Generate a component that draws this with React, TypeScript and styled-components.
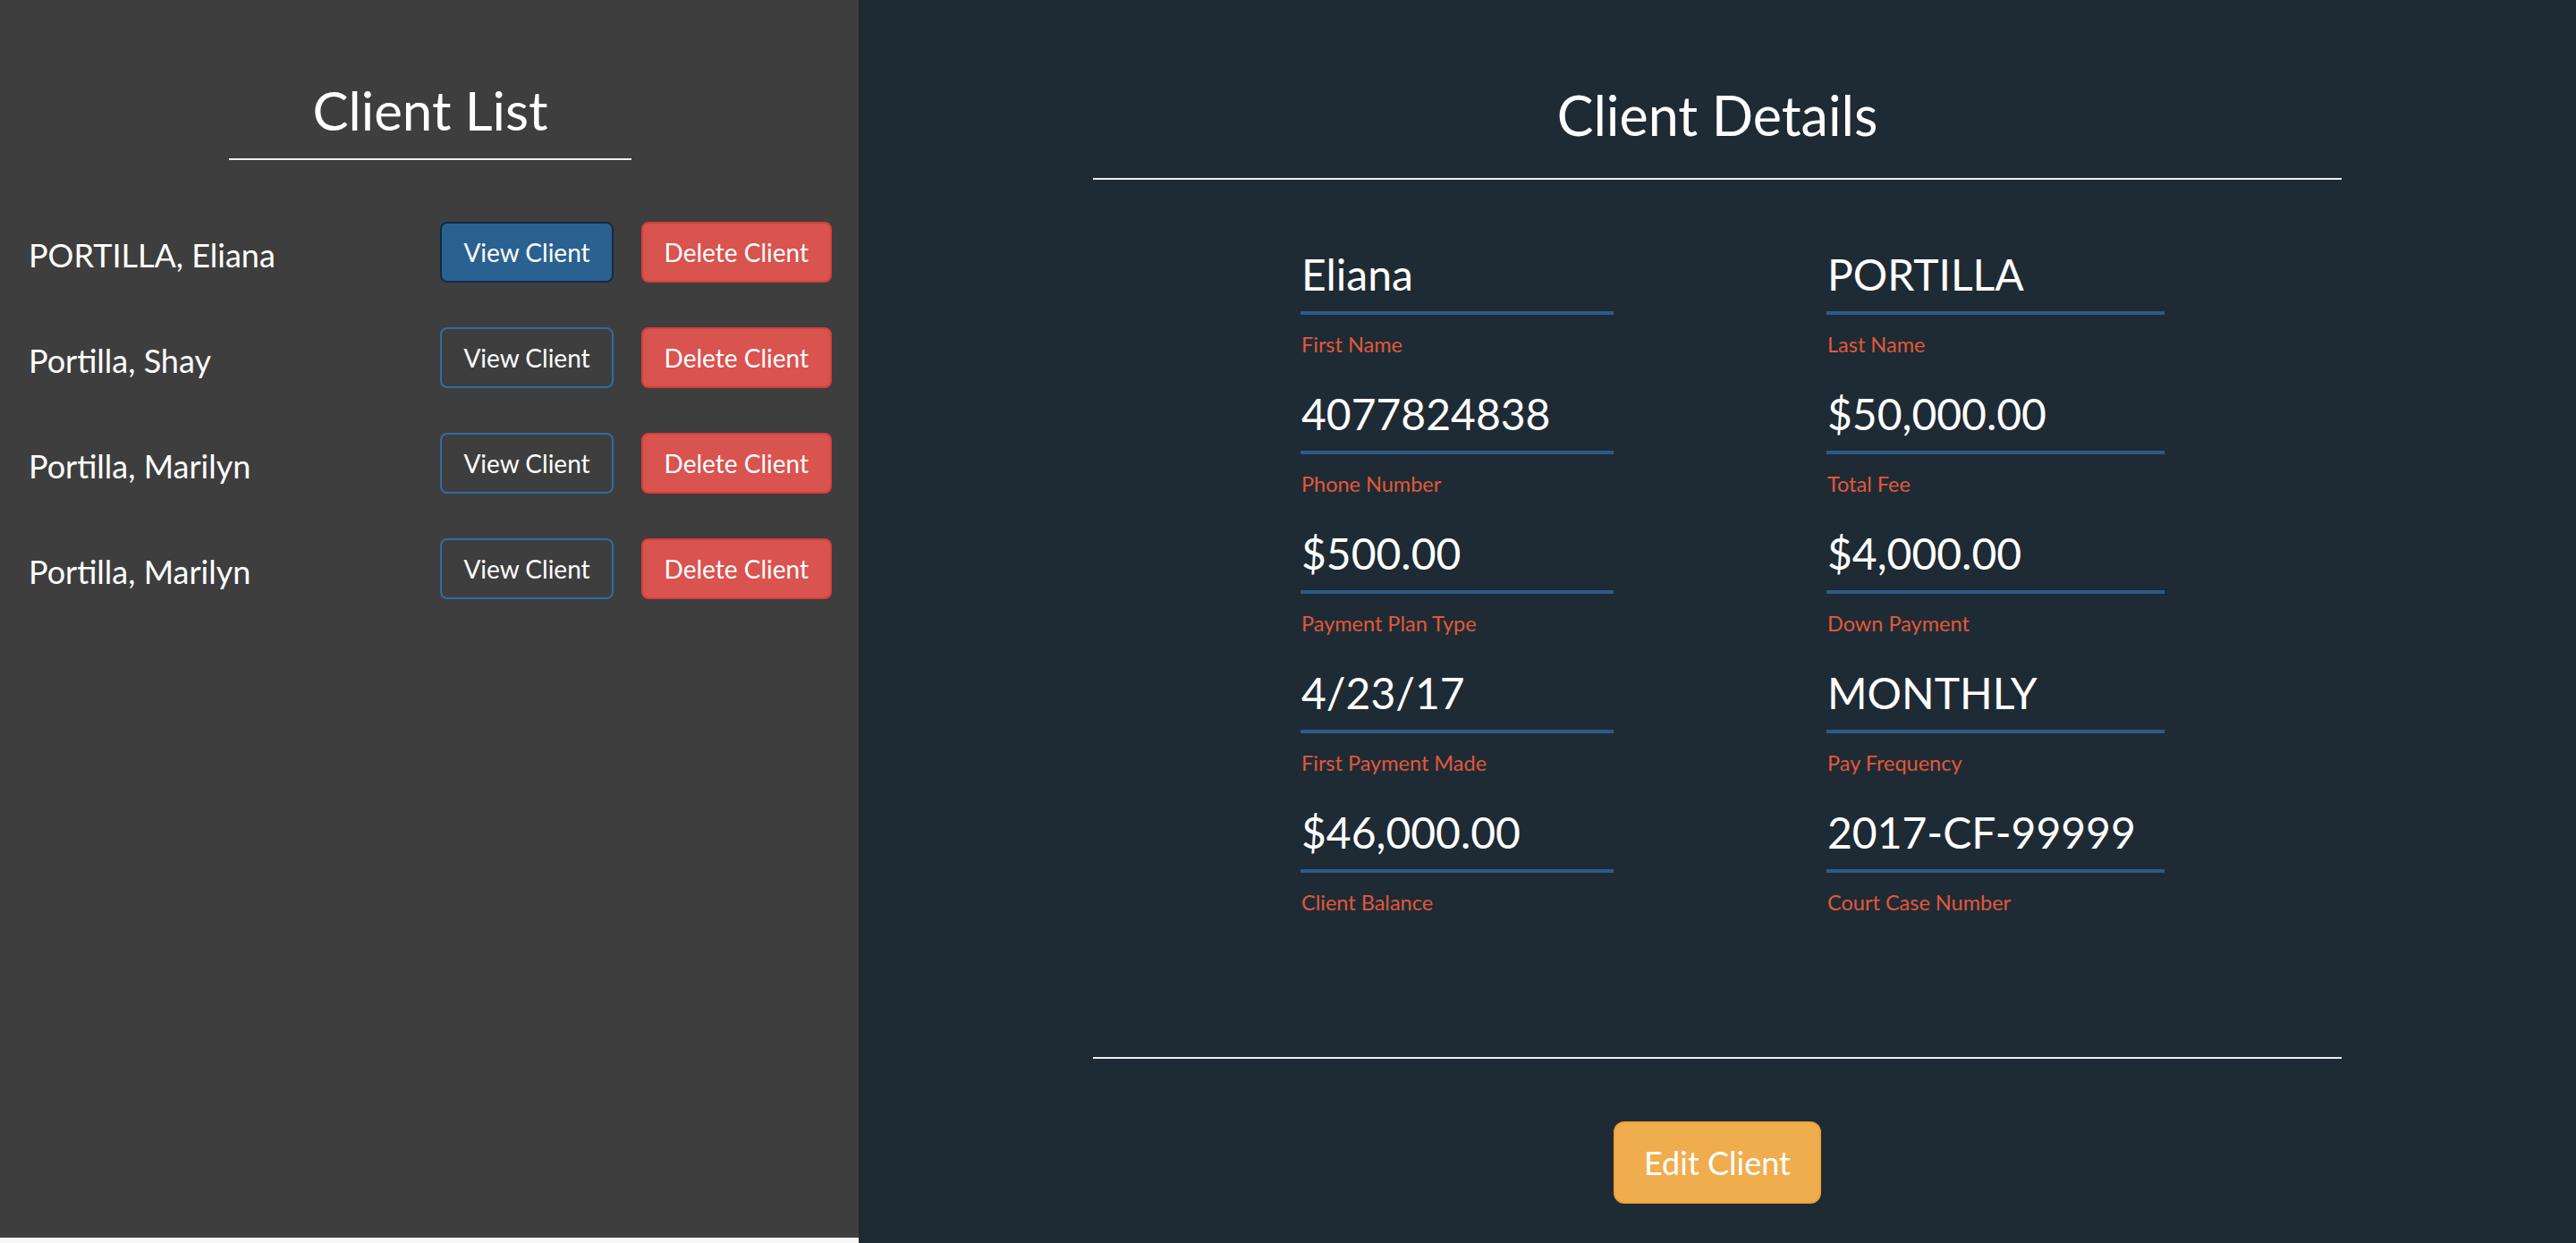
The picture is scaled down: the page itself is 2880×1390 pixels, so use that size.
import React from "react";
import styled, { createGlobalStyle } from "styled-components";

const GlobalStyle = createGlobalStyle`
  html, body {
    margin: 0;
    padding: 0;
    background: #f7f7f7;
    font-family: Lato, "Open Sans", Arial, sans-serif;
  }
  * { box-sizing: border-box; }
`;

const Page = styled.div`
  display: flex;
  align-items: flex-start;
  width: 2880px;
`;

const ListPanel = styled.aside`
  width: 960px;
  height: 1384px;
  background: #3e3e3e;
  padding: 90px 30px 0 32px;
  display: flex;
  flex-direction: column;
`;

const DetailsPanel = styled.main`
  flex: 1;
  min-height: 1390px;
  background: #1e2b34;
  padding: 95px 0 44px;
  display: flex;
  flex-direction: column;
  align-items: center;
`;

const PanelTitle = styled.h2<{ $size: number }>`
  margin: 0;
  font-size: ${(p) => p.$size}px;
  line-height: ${(p) => Math.round(p.$size * 1.1)}px;
  font-weight: 400;
  color: #ffffff;
  text-align: center;
`;

const Rule = styled.hr<{ $width: number; $top: number }>`
  width: ${(p) => p.$width}px;
  margin: ${(p) => p.$top}px auto 0;
  border: 0;
  border-top: 2px solid #eeeeee;
  height: 0;
`;

const ClientRows = styled.div`
  margin-top: 69px;
  display: flex;
  flex-direction: column;
  gap: 50px;
`;

const ClientRow = styled.div`
  display: flex;
  align-items: flex-start;
  justify-content: space-between;
`;

const ClientName = styled.span`
  margin-top: 16px;
  font-size: 36px;
  line-height: 43px;
  color: #ffffff;
`;

const Actions = styled.div`
  display: flex;
  gap: 31px;
`;

const Button = styled.button<{ $variant: "primary" | "outline" | "danger" | "warning"; $large?: boolean }>`
  font-family: Lato, "Open Sans", Arial, sans-serif;
  font-size: ${(p) => (p.$large ? 36 : 28)}px;
  line-height: ${(p) => (p.$large ? 48 : 40)}px;
  padding: ${(p) => (p.$large ? "20px 32px" : "12px 24px")};
  border-radius: ${(p) => (p.$large ? 12 : 8)}px;
  border: 2px solid
    ${(p) =>
      p.$variant === "primary"
        ? "#122b40"
        : p.$variant === "outline"
        ? "#2e6da4"
        : p.$variant === "danger"
        ? "#d43f3a"
        : "#eea236"};
  background: ${(p) =>
    p.$variant === "primary"
      ? "#2a6190"
      : p.$variant === "outline"
      ? "transparent"
      : p.$variant === "danger"
      ? "#d9534f"
      : "#f0ad4e"};
  color: #ffffff;
  font-weight: 400;
  cursor: pointer;
  white-space: nowrap;
`;

const FieldGrid = styled.div`
  margin-top: 77px;
  align-self: stretch;
  padding-left: 494px;
  display: grid;
  grid-template-columns: 350px 378px;
  column-gap: 238px;
  row-gap: 36px;
`;

const Field = styled.div`
  display: flex;
  flex-direction: column;
`;

const FieldValue = styled.div`
  font-size: 48px;
  line-height: 58px;
  color: #ffffff;
  padding-left: 1px;
`;

const FieldBar = styled.div`
  margin-top: 12px;
  height: 4px;
  background: #2d5a88;
`;

const FieldLabel = styled.div`
  margin-top: 20px;
  font-size: 23.5px;
  line-height: 26px;
  color: #e2583a;
  padding-left: 1px;
`;

const Footer = styled.div`
  margin-top: 70px;
`;

const clients = [
  { name: "PORTILLA, Eliana", active: true },
  { name: "Portilla, Shay", active: false },
  { name: "Portilla, Marilyn", active: false },
  { name: "Portilla, Marilyn", active: false },
];

const fields = [
  ["Eliana", "First Name"],
  ["PORTILLA", "Last Name"],
  ["4077824838", "Phone Number"],
  ["$50,000.00", "Total Fee"],
  ["$500.00", "Payment Plan Type"],
  ["$4,000.00", "Down Payment"],
  ["4/23/17", "First Payment Made"],
  ["MONTHLY", "Pay Frequency"],
  ["$46,000.00", "Client Balance"],
  ["2017-CF-99999", "Court Case Number"],
];

export default function App() {
  return (
    <>
      <GlobalStyle />
      <Page>
        <ListPanel>
          <PanelTitle $size={60}>Client List</PanelTitle>
          <Rule $width={450} $top={21} />
          <ClientRows>
            {clients.map((c, i) => (
              <ClientRow key={i}>
                <ClientName>{c.name}</ClientName>
                <Actions>
                  <Button $variant={c.active ? "primary" : "outline"}>View Client</Button>
                  <Button $variant="danger">Delete Client</Button>
                </Actions>
              </ClientRow>
            ))}
          </ClientRows>
        </ListPanel>
        <DetailsPanel>
          <PanelTitle $size={61}>Client Details</PanelTitle>
          <Rule $width={1396} $top={37} />
          <FieldGrid>
            {fields.map(([value, label]) => (
              <Field key={label}>
                <FieldValue>{value}</FieldValue>
                <FieldBar />
                <FieldLabel>{label}</FieldLabel>
              </Field>
            ))}
          </FieldGrid>
          <Rule $width={1396} $top={160} />
          <Footer>
            <Button $variant="warning" $large>
              Edit Client
            </Button>
          </Footer>
        </DetailsPanel>
      </Page>
    </>
  );
}
